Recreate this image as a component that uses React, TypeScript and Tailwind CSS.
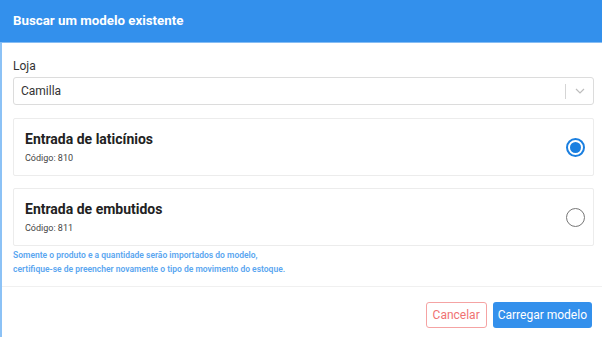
import React from "react";

export default function App() {
  const font = { fontFamily: "Roboto, 'Noto Sans', sans-serif" };
  return (
    <div className="w-[602px] h-[337px] bg-white overflow-hidden flex flex-col" style={font}>
      <div className="h-[43px] bg-[#3390ec] border-b border-[#86bdf4] flex items-center px-[13px] shrink-0">
        <span className="text-white font-bold text-[13.3px] leading-none">Buscar um modelo existente</span>
      </div>
      <div className="flex-1 flex flex-col border-l-2 border-[#8cc2f6]">
        <div className="pl-[11px] pr-[8px] pt-[15px]">
          <div className="text-[12px] text-[#333] leading-[16px]">Loja</div>
          <div className="mt-[3px] h-[28px] border border-[#dcdcdc] rounded-[3px] flex items-center">
            <span className="flex-1 pl-[7px] text-[12px] text-[#333]">Camilla</span>
            <div className="w-px h-[15px] bg-[#d5d5d5]" />
            <div className="w-[27px] flex items-center justify-center">
              <svg width="10" height="6" viewBox="0 0 10 6" fill="none">
                <path d="M1 1l4 4 4-4" stroke="#bdbdbd" strokeWidth="1.2" />
              </svg>
            </div>
          </div>
          <div className="mt-[13px] flex flex-col gap-[12px]">
            <Card title="Entrada de laticínios" code="Código: 810" selected />
            <Card title="Entrada de embutidos" code="Código: 811" />
          </div>
          <div className="mt-[2px] text-[8.5px] leading-[14px] font-semibold text-[#5aa6f0]">
            <div>Somente o produto e a quantidade serão importados do modelo,</div>
            <div>certifique-se de preencher novamente o tipo de movimento do estoque.</div>
          </div>
        </div>
        <div className="mt-[10px] border-t border-[#f0f0f0]" />
        <div className="flex justify-end gap-[6px] pr-[10px] pt-[15px]">
          <button className="h-[26px] px-[6px] border border-[#f5a3a3] rounded-[3px] text-[12px] text-[#f07272] bg-white">
            Cancelar
          </button>
          <button className="h-[26px] px-[5px] rounded-[3px] text-[12px] text-white bg-[#3390ec]">
            Carregar modelo
          </button>
        </div>
      </div>
    </div>
  );
}

function Card({ title, code, selected }: { title: string; code: string; selected?: boolean }) {
  return (
    <div className="h-[58px] border border-[#ececec] rounded-[2px] flex items-center pl-[11px] pr-[8px]">
      <div className="flex-1">
        <div className="text-[14px] font-bold text-[#222] leading-[20px]">{title}</div>
        <div className="text-[9px] text-[#444] leading-[14px] mt-[2px]">{code}</div>
      </div>
      {selected ? (
        <div className="w-[19px] h-[19px] rounded-full border-2 border-[#1a7fe0] flex items-center justify-center">
          <div className="w-[11px] h-[11px] rounded-full bg-[#1a7fe0]" />
        </div>
      ) : (
        <div className="w-[19px] h-[19px] rounded-full border-[1.5px] border-[#777]" />
      )}
    </div>
  );
}
